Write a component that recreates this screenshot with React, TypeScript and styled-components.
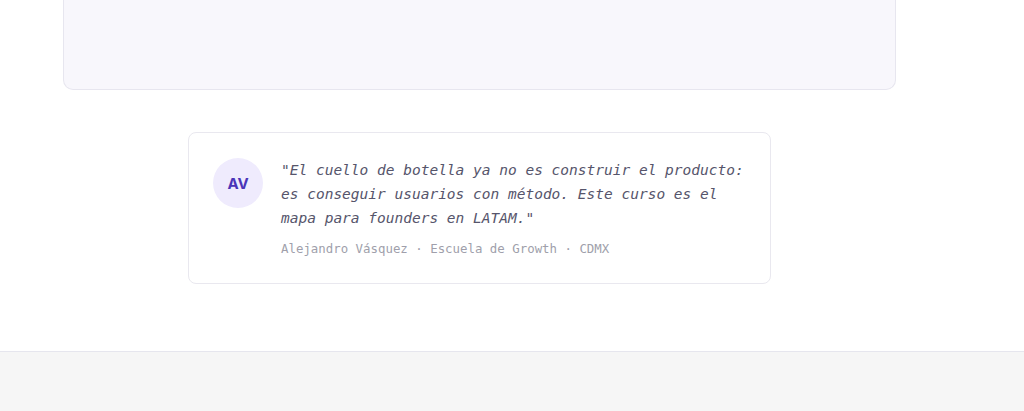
import React from "react";
import styled, { createGlobalStyle } from "styled-components";

const Global = createGlobalStyle`
  html, body {
    margin: 0;
    padding: 0;
    background: #ffffff;
  }
  * { box-sizing: border-box; }
`;

const Page = styled.div`
  display: flex;
  flex-direction: column;
  min-height: 411px;
`;

const Main = styled.main`
  width: 833px;
  margin-left: 63px;
  display: flex;
  flex-direction: column;
  align-items: center;
  padding-bottom: 67px;
`;

const Panel = styled.div`
  align-self: stretch;
  height: 90px;
  background: #f8f7fc;
  border: 1px solid #e7e6ef;
  border-top: none;
  border-radius: 0 0 10px 10px;
`;

const Quote = styled.figure`
  margin: 42px 0 0;
  width: 583px;
  padding: 25px 24px;
  border: 1px solid #e9e8ef;
  border-radius: 8px;
  background: #fff;
  display: flex;
  gap: 18px;
  align-items: flex-start;
`;

const Avatar = styled.div`
  flex: none;
  width: 50px;
  height: 50px;
  border-radius: 50%;
  background: #efebfd;
  color: #4a35b8;
  display: flex;
  align-items: center;
  justify-content: center;
  font-family: Inter, "Liberation Sans", sans-serif;
  font-weight: 700;
  font-size: 15px;
`;

const Body = styled.div`
  display: flex;
  flex-direction: column;
  gap: 10px;
  min-width: 0;
`;

const Text = styled.blockquote`
  margin: 0;
  font-family: "DejaVu Sans Mono", "Liberation Mono", monospace;
  font-style: italic;
  font-size: 14.5px;
  line-height: 24px;
  color: #56556b;
`;

const Meta = styled.figcaption`
  font-family: "DejaVu Sans Mono", "Liberation Mono", monospace;
  font-size: 12.4px;
  line-height: 18px;
  color: #a09fab;
`;

const Footer = styled.footer`
  flex: 1;
  min-height: 60px;
  background: #f6f6f6;
  border-top: 1px solid #e6e6ee;
`;

export default function App() {
  return (
    <Page>
      <Global />
      <Main>
        <Panel />
        <Quote>
          <Avatar>AV</Avatar>
          <Body>
            <Text>
              "El cuello de botella ya no es construir el producto: es
              conseguir usuarios con método. Este curso es el mapa para
              founders en LATAM."
            </Text>
            <Meta>Alejandro Vásquez · Escuela de Growth · CDMX</Meta>
          </Body>
        </Quote>
      </Main>
      <Footer />
    </Page>
  );
}
